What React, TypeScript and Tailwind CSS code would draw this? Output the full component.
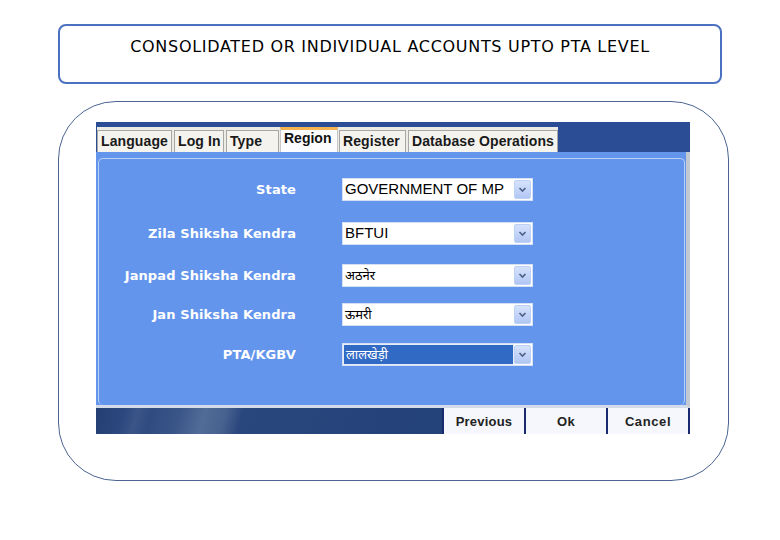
import React from "react";

const rows = [
  { label: "State", value: "GOVERNMENT OF MP", mt: "mt-[19px]", sel: false },
  { label: "Zila Shiksha Kendra", value: "BFTUI", mt: "mt-[21px]", sel: false },
  { label: "Janpad Shiksha Kendra", value: "अठनेर", mt: "mt-[19px]", sel: false },
  { label: "Jan Shiksha Kendra", value: "ऊमरी", mt: "mt-[16px]", sel: false },
  { label: "PTA/KGBV", value: "लालखेड़ी", mt: "mt-[17px]", sel: true },
];

const tabs = [
  { t: "Language", w: "w-[75px]", mr: "mr-[2px]" },
  { t: "Log In", w: "w-[50px]", mr: "mr-[2px]" },
  { t: "Type", w: "w-[53px]", mr: "mr-[1px]" },
  { t: "Region", w: "w-[58px]", mr: "mr-[1px]" },
  { t: "Register", w: "w-[67px]", mr: "mr-[2px]" },
  { t: "Database Operations", w: "w-[150px]", mr: "mr-0" },
];

function Arrow() {
  return (
    <div className="w-[17px] h-[19px] mr-[1px] flex items-center justify-center rounded-[2px] border border-[#bdd0f5] bg-[linear-gradient(180deg,#d6e2fc_0%,#c0d2f8_60%,#b1c6f3_100%)]">
      <svg width="9" height="7" viewBox="0 0 9 7">
        <path d="M1.5 2 L4.5 5 L7.5 2" fill="none" stroke="#4d6185" strokeWidth="1.6" />
      </svg>
    </div>
  );
}

export default function App() {
  return (
    <div className="w-[780px] h-[540px] bg-white pt-[24px] pl-[58px]" style={{ fontFamily: '"Liberation Sans", Arial, sans-serif' }}>
      <div className="w-[664px] h-[60px] rounded-[8px] border-2 border-[#4b71c2] flex justify-center pt-[9px]">
        <div className="text-[16px] text-black tracking-[0.7px]" style={{ fontFamily: '"DejaVu Sans", sans-serif' }}>
          CONSOLIDATED OR INDIVIDUAL ACCOUNTS UPTO PTA LEVEL
        </div>
      </div>

      <div className="mt-[17px] w-[671px] h-[380px] rounded-[58px] border border-[#4a6591] pl-[37px] pt-[20px]">
        <div className="w-[594px] h-[312px] flex flex-col">
          {/* header with tabs */}
          <div className="h-[30px] bg-[#2b4d95] flex items-end">
            <div className="flex items-end h-[25px] bg-[#ecebe4] ml-[1px]">
              {tabs.map(({ t, w, mr }) =>
                t === "Region" ? (
                  <div
                    key={t}
                    className={`${w} ${mr} h-[25px] pl-[3px] bg-[#fcfcfe] border-t-[3px] border-t-[#f3b451] border-x border-x-[#c8c8c8] flex items-start text-[14px] font-bold text-[#111] leading-[17px]`}
                  >
                    {t}
                  </div>
                ) : (
                  <div
                    key={t}
                    className={`${w} ${mr} h-[22px] pl-[3px] bg-[#f4f3ee] border-x border-t border-[#a7a7a7] flex items-center text-[14px] font-bold text-[#1a1a1a] tracking-[0.1px]`}
                  >
                    {t}
                  </div>
                )
              )}
            </div>
          </div>

          {/* panel */}
          <div className="h-[256px] bg-[#6495ed] border-r-4 border-r-[#c4c8d0] border-b-[3px] border-b-[#d3dbe8] pl-[2px] pt-[6px] pr-[1px]">
            <div className="h-full rounded-[5px] border border-[#b8d0f6] border-b-0 flex flex-col">
              {rows.map((r) => (
                <div key={r.label} className={`${r.mt} flex items-center h-[23px]`}>
                  <div className="w-[197px] text-right text-white font-bold tracking-[0.1px]" style={{ fontFamily: '"DejaVu Sans", sans-serif', fontSize: "13px" }}>
                    {r.label}
                  </div>
                  <div className="ml-[46px] w-[191px] h-[23px] bg-white border border-[#d5e0f5] flex items-center">
                    <div
                      className={`flex-1 h-full flex items-center pl-[2px] ${
                        r.sel ? "bg-[#316ac5] text-white border border-[#e6ecf8]" : "text-black"
                      }`}
                      style={{ fontFamily: '"Liberation Sans", "Noto Sans", sans-serif', fontSize: r.value.match(/[A-Z]/) ? "15px" : "13px" }}
                    >
                      {r.value}
                    </div>
                    <Arrow />
                  </div>
                </div>
              ))}
            </div>
          </div>

          {/* footer */}
          <div className="h-[26px] flex">
            <div className="w-[346px] h-full bg-[linear-gradient(105deg,#243f72_0%,#2b477d_8%,#3a5586_12%,#2f4b80_16%,#3a5688_24%,#526c98_31%,#48628f_37%,#29467d_42%,#24427a_100%)]" />
            <div className="w-[82px] h-full pt-[2px] border-l-2 border-[#1a2a6e] bg-[#f5f7fc] flex items-center justify-center text-[13px] font-bold text-[#222] tracking-[0.2px]">
              Previous
            </div>
            <div className="w-[82px] h-full pt-[2px] border-l-2 border-[#1a2a6e] bg-[#f5f7fc] flex items-center justify-center text-[13px] font-bold text-[#222] tracking-[0.3px]">
              Ok
            </div>
            <div className="w-[84px] h-full pt-[2px] border-x-2 border-[#1a2a6e] bg-[#f5f7fc] flex items-center justify-center text-[13px] font-bold text-[#222] tracking-[0.6px]">
              Cancel
            </div>
          </div>
        </div>
      </div>
    </div>
  );
}
